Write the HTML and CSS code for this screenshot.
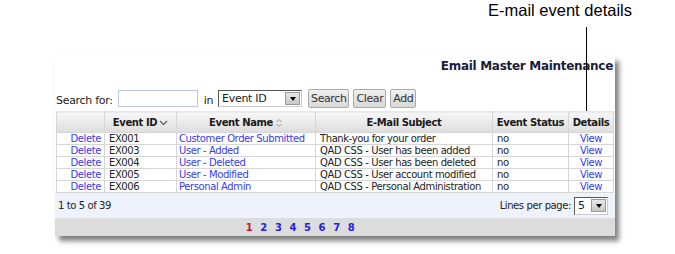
FILE: index.html
```html
<!DOCTYPE html>
<html lang="en">
<head>
    <meta charset="UTF-8">
    <title>Email Master Maintenance</title>
    <link rel="stylesheet" href="styles.css">
</head>
<body>
    <!-- callout label over the screenshot -->
    <div class="callout">E-mail event details</div>
    <div class="callout-line"></div>

    <div class="page">
        <div class="panel">
            <div class="panel-title">Email Master Maintenance</div>

            <div class="search-bar">
                <label>Search for:</label>
                <input type="text" class="search-input">
                <span class="in-label">in</span>
                <span class="select-box select-field">
                    <span class="select-text">Event ID</span>
                    <span class="select-arrow"></span>
                </span>
                <button class="btn">Search</button>
                <button class="btn">Clear</button>
                <button class="btn">Add</button>
            </div>

            <table class="grid">
                <colgroup>
                    <col style="width:48px">
                    <col style="width:72px">
                    <col style="width:139px">
                    <col style="width:177px">
                    <col style="width:76px">
                    <col style="width:45px">
                </colgroup>
                <thead>
                    <tr>
                        <th></th>
                        <th>Event ID<svg class="sort-icon" width="9" height="7" viewBox="0 0 9 7"><path d="M1 2 L4.5 5.5 L8 2" fill="none" stroke="#555" stroke-width="1.2"/></svg></th>
                        <th>Event Name<svg class="sort-icon" width="8" height="10" viewBox="0 0 8 10"><path d="M1.5 4 L4 1.5 L6.5 4 M1.5 6 L4 8.5 L6.5 6" fill="none" stroke="#999" stroke-width="1"/></svg></th>
                        <th>E-Mail Subject</th>
                        <th>Event Status</th>
                        <th>Details</th>
                    </tr>
                </thead>
                <tbody>
                    <tr>
                        <td class="col-del"><a href="#">Delete</a></td>
                        <td>EX001</td>
                        <td class="col-name"><a href="#">Customer Order Submitted</a></td>
                        <td>Thank-you for your order</td>
                        <td>no</td>
                        <td class="col-view"><a href="#">View</a></td>
                    </tr>
                    <tr>
                        <td class="col-del"><a href="#">Delete</a></td>
                        <td>EX003</td>
                        <td class="col-name"><a href="#">User - Added</a></td>
                        <td>QAD CSS - User has been added</td>
                        <td>no</td>
                        <td class="col-view"><a href="#">View</a></td>
                    </tr>
                    <tr>
                        <td class="col-del"><a href="#">Delete</a></td>
                        <td>EX004</td>
                        <td class="col-name"><a href="#">User - Deleted</a></td>
                        <td>QAD CSS - User has been deleted</td>
                        <td>no</td>
                        <td class="col-view"><a href="#">View</a></td>
                    </tr>
                    <tr>
                        <td class="col-del"><a href="#">Delete</a></td>
                        <td>EX005</td>
                        <td class="col-name"><a href="#">User - Modified</a></td>
                        <td>QAD CSS - User account modified</td>
                        <td>no</td>
                        <td class="col-view"><a href="#">View</a></td>
                    </tr>
                    <tr>
                        <td class="col-del"><a href="#">Delete</a></td>
                        <td>EX006</td>
                        <td class="col-name"><a href="#">Personal Admin</a></td>
                        <td>QAD CSS - Personal Administration</td>
                        <td>no</td>
                        <td class="col-view"><a href="#">View</a></td>
                    </tr>
                </tbody>
            </table>

            <div class="grid-info">
                <span>1 to 5 of 39</span>
                <span class="lines-per-page">
                    Lines per page:
                    <span class="select-box select-lines">
                        <span class="select-text">5</span>
                        <span class="select-arrow"></span>
                    </span>
                </span>
            </div>

            <div class="pager">
                <a href="#" class="current">1</a>
                <a href="#">2</a>
                <a href="#">3</a>
                <a href="#">4</a>
                <a href="#">5</a>
                <a href="#">6</a>
                <a href="#">7</a>
                <a href="#">8</a>
            </div>
        </div>
    </div>
</body>
</html>
```

FILE: styles.css
```css
:root {
    --text-dark: #222;
    --link-blue: #3a3ae6;
    --grid-border: #d6d6d6;
    --info-bg: #eef2fa;
    --pager-bg: #dcdcdc;
    --title-color: #1c1c38;
}

* {
    margin: 0;
    padding: 0;
    box-sizing: border-box;
}

body {
    background: #fff;
    color: var(--text-dark);
    font-family: "DejaVu Sans", Verdana, sans-serif;
    font-size: 10px;
    letter-spacing: -0.4px;
    width: 675px;
    height: 254px;
    overflow: hidden;
    position: relative;
}

a {
    color: var(--link-blue);
    text-decoration: none;
}

.callout {
    position: absolute;
    top: 1px;
    left: 488px;
    font-family: "Liberation Sans", Arial, sans-serif;
    font-size: 16.5px;
    letter-spacing: 0;
    color: #000;
}

.callout-line {
    position: absolute;
    left: 586px;
    top: 27px;
    width: 1px;
    height: 84px;
    background: #000;
    z-index: 2;
}

.page {
    padding: 56px 0 0 55px;
}

.panel {
    width: 560px;
    background: #fff;
    box-shadow: 4px 5px 5px rgba(0, 0, 0, 0.5);
}

.panel-title {
    text-align: right;
    font-weight: bold;
    font-size: 12px;
    letter-spacing: -0.3px;
    color: var(--title-color);
    padding: 3px 2px 0 0;
    line-height: 14px;
}

.search-bar {
    display: flex;
    align-items: center;
    padding: 16px 0 3px 1px;
    font-size: 11px;
    letter-spacing: -0.3px;
}

.search-bar label {
    margin-top: 3px;
}

.search-input {
    width: 80px;
    height: 17px;
    margin-left: 5px;
    border: 1px solid #b9c9ea;
    background: #fff;
}

.in-label {
    margin: 3px 5px 0 6px;
}

.select-box {
    display: flex;
    align-items: center;
    height: 17px;
    border: 1px solid #555;
    border-right-color: #ccc;
    border-bottom-color: #ccc;
    background: #fff;
    padding: 0 1px 0 3px;
}

.select-field {
    width: 84px;
    font-size: 11px;
}

.select-text {
    flex: 1;
}

.select-arrow {
    width: 15px;
    height: 13px;
    background: linear-gradient(#e8e8e8, #c8c8c8);
    border: 1px solid #999;
    position: relative;
}

.select-arrow::after {
    content: '';
    position: absolute;
    left: 4px;
    top: 4px;
    border-left: 3px solid transparent;
    border-right: 3px solid transparent;
    border-top: 4px solid #000;
}

.btn {
    height: 19px;
    margin-left: 4px;
    padding: 0 2px;
    font-family: "DejaVu Sans", Verdana, sans-serif;
    font-size: 11px;
    letter-spacing: -0.4px;
    color: #333;
    background: linear-gradient(#f0f0f0, #d8d8d8);
    border: 1px solid #aaa;
    border-radius: 2px;
}

.btn:first-of-type {
    margin-left: 6px;
}

.grid {
    width: 557px;
    margin-left: 1px;
    border-collapse: collapse;
    table-layout: fixed;
}

.grid th {
    height: 21px;
    font-weight: bold;
    text-align: center;
    color: #1a1a1a;
    background: linear-gradient(#f7f7f7, #dddddd);
    border: 1px solid var(--grid-border);
    border-top-color: #e8e8e8;
    white-space: nowrap;
}

.sort-icon {
    margin-left: 2px;
    vertical-align: middle;
}

.grid td {
    height: 12px;
    line-height: 11px;
    padding: 0 4px;
    border: 1px solid var(--grid-border);
    white-space: nowrap;
    overflow: hidden;
}

.grid td.col-del {
    text-align: right;
    padding-right: 3px;
}

.grid td.col-name {
    padding-left: 2px;
}

.grid td.col-view {
    text-align: center;
}

.grid-info {
    display: flex;
    justify-content: space-between;
    align-items: center;
    height: 25px;
    padding: 0 7px 0 3px;
    background: var(--info-bg);
}

.lines-per-page {
    display: flex;
    align-items: center;
    gap: 3px;
}

.select-lines {
    width: 34px;
    height: 18px;
    font-size: 11px;
}

.pager {
    display: flex;
    justify-content: center;
    gap: 8px;
    height: 18px;
    align-items: center;
    padding-right: 70px;
    background: var(--pager-bg);
    font-weight: bold;
    font-size: 10px;
}

.pager a {
    color: #2222dd;
}

.pager a.current {
    color: #cc1133;
}
```
